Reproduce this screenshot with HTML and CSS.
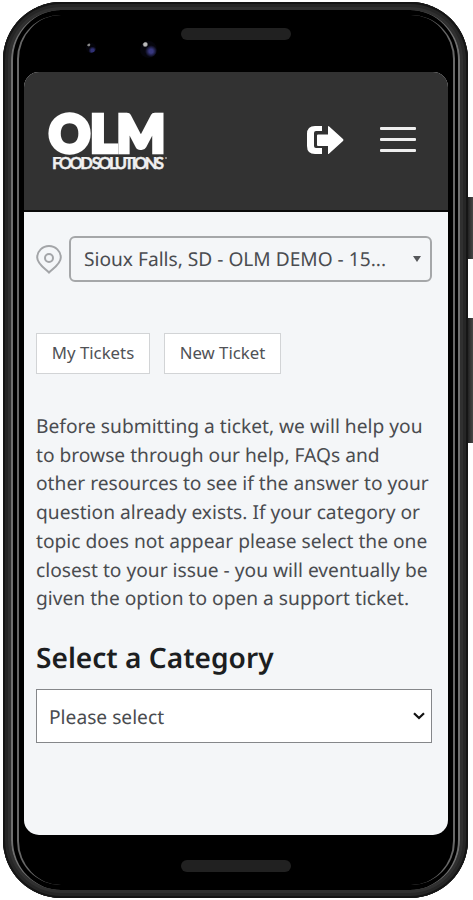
FILE: index.html
```html
<!DOCTYPE html>
<html lang="en">
<head>
    <meta charset="UTF-8">
    <meta name="viewport" content="width=device-width, initial-scale=1.0">
    <title>OLM Food Solutions - Support</title>
    <link rel="stylesheet" href="styles.css">
</head>
<body>
    <div class="phone">
        <span class="side-button power"></span>
        <span class="side-button volume"></span>
        <span class="rim rim-outer"></span>
        <span class="rim rim-inner"></span>
        <span class="lens lens-small"></span>
        <span class="lens lens-large"></span>

        <div class="bezel-top">
            <span class="speaker"></span>
        </div>

        <div class="screen">
            <header class="header">
                <svg class="logo" width="120" height="64" viewBox="0 0 120 64">
                    <text class="logo-main" x="1" y="41.500" textLength="116" lengthAdjust="spacingAndGlyphs">OLM</text>
                    <text class="logo-sub" x="4" y="59" textLength="112" lengthAdjust="spacing">FOOD SOLUTIONS</text>
                    <circle cx="118" cy="48" r="1" fill="#aaa"/>
                </svg>
                <div class="header-actions">
                    <svg width="38" height="30" viewBox="0 0 38 30" fill="#fff">
                        <path d="M16 1v5h-6q-2 0-2 2v13q0 2 2 2h6v6H9q-8 0-8-8V9q0-8 8-8z"/>
                        <path d="M22 1.500q0-1 1.200 0L37 14q1 1 0 2L23.200 28.500q-1.200 1-1.200 0V21H12q-1 0-1-1v-9.500q0-1 1-1h10z"/>
                    </svg>
                    <div class="menu">
                        <span></span>
                        <span></span>
                        <span></span>
                    </div>
                </div>
            </header>

            <main class="content">
                <div class="location">
                    <svg width="26" height="29" viewBox="0 0 26 29" fill="none" stroke="#a3a5a8" stroke-width="2">
                        <path d="M13 27.500C9 23.500 1.200 19 1.200 12.500a11.800 11.500 0 0 1 23.600 0C24.800 19 17 23.500 13 27.500z"/>
                        <circle cx="13" cy="13" r="4"/>
                    </svg>
                    <div class="location-select">
                        <span>Sioux Falls, SD - OLM DEMO - 15...</span>
                        <span class="caret"></span>
                    </div>
                </div>

                <div class="tabs">
                    <button class="tab tab-my">My Tickets</button>
                    <button class="tab tab-new">New Ticket</button>
                </div>

                <p class="intro">
                    Before submitting a ticket, we will help you<br>
                    to browse through our help, FAQs and<br>
                    other resources to see if the answer to your<br>
                    question already exists. If your category or<br>
                    topic does not appear please select the one<br>
                    closest to your issue - you will eventually be<br>
                    given the option to open a support ticket.
                </p>

                <h1>Select a Category</h1>
                <div class="category-select">
                    <span>Please select</span>
                    <svg width="12" height="8" viewBox="0 0 12 8" fill="none" stroke="#111" stroke-width="2.200">
                        <path d="M1 1.200l5 4.800 5-4.800"/>
                    </svg>
                </div>
            </main>
        </div>

        <div class="bezel-bottom">
            <span class="speaker"></span>
        </div>
    </div>
</body>
</html>
```
FILE: styles.css
```css
* {
    margin: 0;
    padding: 0;
    box-sizing: border-box;
}

body {
    height: 900px;
    overflow: hidden;
    background: #fff;
    font-family: 'Noto Sans', sans-serif;
    color: #4a4c50;
    text-rendering: geometricPrecision;
}

/* Phone frame */
.phone {
    position: relative;
    width: 465px;
    height: 896px;
    margin: 2px 0 0 3px;
    padding: 0 20px 0 21px;
    border-radius: 58px;
    background: #000;
    box-shadow: inset 0 0 0 2px #151515, inset 0 0 0 5px #262626, inset 0 0 0 8px #303030;
}

.rim {
    position: absolute;
    border: solid transparent;
    border-width: 0 2px;
    pointer-events: none;
}

.rim-outer {
    inset: 8px;
    border-color: #707070;
    border-radius: 50px;
}

.rim-inner {
    inset: 13px 13px 13px 14px;
    border-color: #686868;
    border-radius: 44px;
}

.side-button {
    position: absolute;
    left: 465px;
    width: 5px;
    background: linear-gradient(90deg, #222, #484848);
}

.power {
    top: 195px;
    height: 62px;
}

.volume {
    top: 316px;
    height: 125px;
}

.lens {
    position: absolute;
    border-radius: 50%;
}

.lens-small {
    left: 83px;
    top: 41px;
    width: 10px;
    height: 10px;
    background: radial-gradient(circle at 27% 18%, #888 0 1px, transparent 2px), radial-gradient(circle at 65% 75%, #303074 0 1.5px, #04040a 4px);
}

.lens-large {
    left: 137px;
    top: 39px;
    width: 17px;
    height: 17px;
    background: radial-gradient(circle at 31% 20%, #bbb 0 1.5px, transparent 3px), radial-gradient(circle at 65% 60%, #38387f 0 2px, #05050c 6px);
}

.bezel-top {
    display: flex;
    justify-content: center;
    height: 70px;
    padding-top: 26px;
}

.bezel-bottom {
    display: flex;
    justify-content: center;
    padding-top: 25px;
}

.speaker {
    width: 110px;
    height: 12px;
    border-radius: 6px;
    background: #212121;
}

/* Screen */
.screen {
    height: 763px;
    border-radius: 15px;
    background: #f4f6f8;
    overflow: hidden;
}

.header {
    display: flex;
    justify-content: space-between;
    height: 140px;
    padding: 38px 32px 0 24px;
    background: #323232;
    border-bottom: 2px solid #0a0a0a;
}

.logo-main {
    font-family: Lato, sans-serif;
    font-size: 51px;
    font-weight: 900;
    fill: #fff;
    stroke: #fff;
    stroke-width: 4.5px;
}

.logo-sub {
    font-family: Lato, sans-serif;
    font-size: 16.5px;
    font-weight: 700;
    fill: #f0f0f0;
    stroke: #f0f0f0;
    stroke-width: 0.4px;
}

.header-actions {
    display: flex;
    gap: 36px;
    padding-top: 15px;
}

.menu {
    display: flex;
    flex-direction: column;
    gap: 8px;
    padding-top: 2px;
}

.menu span {
    width: 36px;
    height: 3px;
    border-radius: 1px;
    background: #eee;
}

.content {
    padding: 24px 16px 0 12px;
}

.location {
    display: flex;
    align-items: center;
    gap: 7px;
}

.location-select {
    flex: 1;
    display: flex;
    justify-content: space-between;
    align-items: center;
    height: 46px;
    padding: 0 9px 0 13px;
    border: 2px solid #a5a7a9;
    border-radius: 6px;
    font-size: 19.15px;
    white-space: nowrap;
}

.caret {
    border: 4.5px solid transparent;
    border-top: 6px solid #55575a;
    border-bottom: 0;
}

.tabs {
    display: flex;
    gap: 14px;
    margin-top: 51px;
}

.tab {
    height: 41px;
    padding-bottom: 3px;
    border: 1px solid #d2d4d6;
    background: #fff;
    color: #505256;
    font-family: inherit;
    font-size: 16.8px;
    white-space: nowrap;
}

.tab-my {
    width: 114px;
}

.tab-new {
    width: 117px;
}

.intro {
    margin-top: 38px;
    font-size: 19.2px;
    line-height: 28.7px;
    white-space: nowrap;
}

h1 {
    margin-top: 27px;
    color: #1c1e21;
    font-size: 28.1px;
    font-weight: 600;
    line-height: 37px;
}

.category-select {
    display: flex;
    justify-content: space-between;
    align-items: center;
    height: 54px;
    margin-top: 12.5px;
    padding: 0 6px 0 12px;
    border: 1px solid #85878a;
    background: #fff;
    font-size: 19.2px;
}
```
